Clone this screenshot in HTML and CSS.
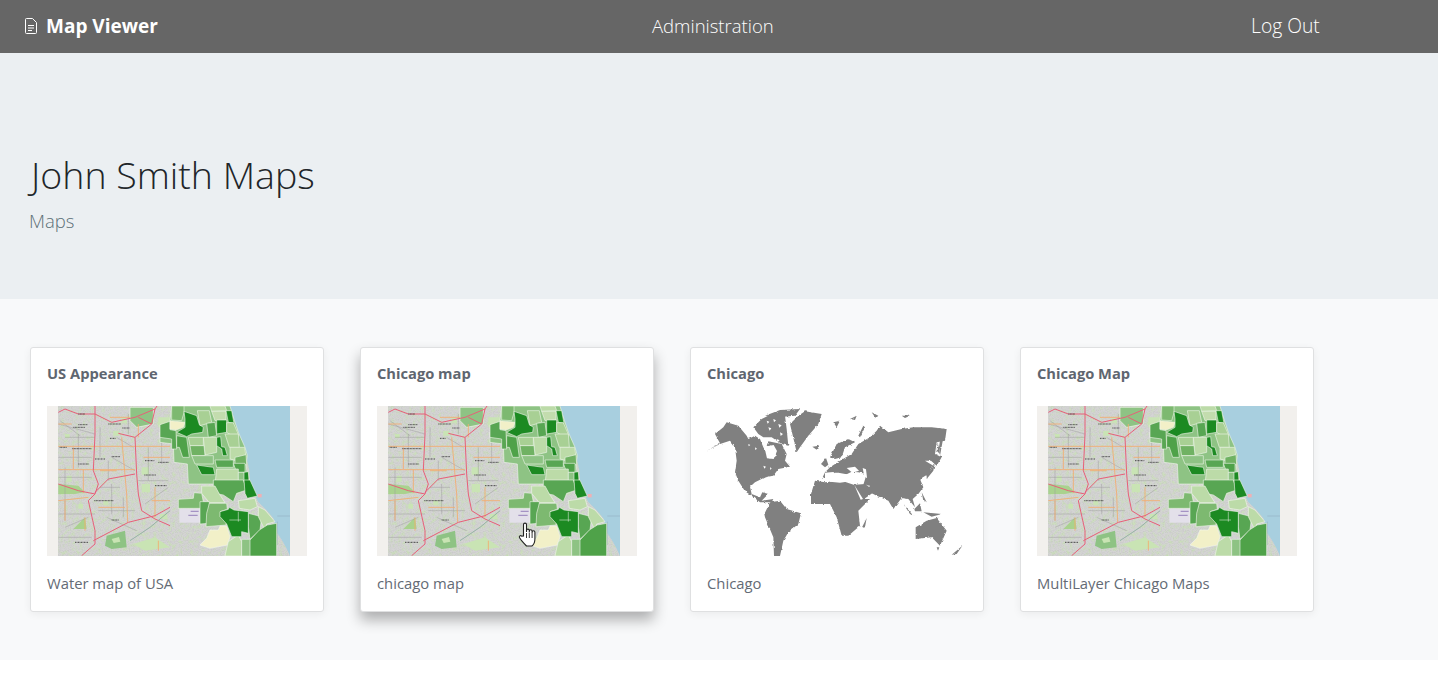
FILE: index.html
```html
<!DOCTYPE html>
<html lang="en">
<head>
  <meta charset="UTF-8">
  <title>Map Viewer</title>
  <link rel="stylesheet" href="styles.css">
</head>
<body>
  <svg class="defs" width="0" height="0">
    <defs>
      <filter id="speckle" x="0" y="0" width="100%" height="100%" color-interpolation-filters="sRGB">
        <feTurbulence type="fractalNoise" baseFrequency="0.09" numOctaves="2" seed="4"/>
        <feColorMatrix values="0 0 0 0 0.78  0 0 0 0 0.9  0 0 0 0 0.68  1.800 0 0 0 -0.82"/>
      </filter>
      <filter id="grain" x="0" y="0" width="100%" height="100%" color-interpolation-filters="sRGB">
        <feTurbulence type="fractalNoise" baseFrequency="0.3" numOctaves="2" seed="11"/>
        <feColorMatrix values="0 0 0 0 0.55  0 0 0 0 0.55  0 0 0 0 0.55  1.600 0 0 0 -0.62"/>
      </filter>
      <filter id="soft" x="0" y="0" width="100%" height="100%">
        <feGaussianBlur stdDeviation="1.800"/>
      </filter>
      <filter id="coast" x="-5%" y="-5%" width="110%" height="110%" color-interpolation-filters="sRGB">
        <feTurbulence type="fractalNoise" baseFrequency="0.1" numOctaves="2" seed="7"/>
        <feDisplacementMap in="SourceGraphic" scale="8" xChannelSelector="R" yChannelSelector="G"/>
        <feGaussianBlur stdDeviation="1"/>
      </filter>

      <symbol id="chicago" viewBox="81 198 780 450">
        <g filter="url(#soft)">
        <rect x="81" y="198" width="780" height="450" fill="#f2f0ed"/>
        <rect x="114" y="198" width="696" height="450" fill="#d4d4d4"/>
        <rect x="114" y="198" width="696" height="450" filter="url(#speckle)"/>
        <rect x="114" y="198" width="696" height="450" filter="url(#grain)" opacity=".2"/>

        <g transform="translate(75 192)">
          <!-- parks -->
          <g fill="#c9e4b4">
            <path d="M40 240l60 5 20 20-30 5h-50z" fill="#a9d28e"/>
            <path d="M85 375l35-35 5 35z" fill="#a9d28e"/>
            <path d="M265 420l65-20 45 30-75 10z"/>
            <path d="M65 215l15 0 0 18-15 0zM205 80l18 0 0 15-18 0zM230 40l16 2 0 14-16 0zM290 190l22 0 0 22-22 0zM290 240l25 0 0 25-25 0zM60 90l14 0 0 12-14 0zM175 290l15 0 0 14-15 0zM100 300l14 0 0 14-14 0zM345 330l22 0 0 15-22 0z"/>
            <path d="M340 40l35 0 0 25-35 5z"/>
          </g>
          <path d="M255 10h70v50l-50 10-20-20z" fill="#8ec384" stroke="#f0f5ea" stroke-width="2"/>
          <path d="M185 395l55-15 5 50-45 5-20-10z" fill="#8ec384"/>
          <path d="M200 405l22-6 4 14-20 4z" fill="#c9e4b4"/>

          <!-- minor roads -->
          <g fill="none" stroke="#9c9c9c" stroke-width="1.400">
            <path d="M45 50l60 45M60 100h90M40 160h100M165 70v90M200 160l70 40M200 240v90M40 330h110M60 370l70-30M160 320h110M280 230h90M310 130v100M350 70v110M165 250h60M235 280v60M40 400h100M185 340l90 40M300 300l70-50M40 60l110 30M215 100l50 30M60 190v160M100 90v100M40 220h100M190 170v60M250 30v60"/>
          </g>
          <g fill="none" stroke="#f3ad6e" stroke-width="2.600">
            <path d="M40 127H375M40 197H270M230 100l15 170 3 85M40 290l90-10M330 250v90M120 340v40M195 40h60M295 160h80M280 60v40M160 310h80M340 410v30M165 200h50M40 60h40M320 290h55M85 130v65M115 197v70M60 290v60"/>
          </g>

          <!-- highways -->
          <g fill="none" stroke="#e85f78" stroke-width="3">
            <path d="M40 25l20-10 40 15h50l50 25 70-15 60-25 10-15"/>
            <path d="M150 6v84l-5 110 15 40-10 30-20 20 20 90v40l-40 35"/>
            <path d="M330 15l-10 45-50 40 5 110 5 60 10 50 40 25 45 20"/>
            <path d="M150 265l40-40 80-15"/>
            <path d="M40 240l60 20 50 10"/>
            <path d="M145 410l105-55 80-20 45-25"/>
            <path d="M270 100l-50-12M320 60l-40-20"/>
          </g>
          <path d="M255 410l60-40 60-50" fill="none" stroke="#86a99b" stroke-width="2.400"/>

          <!-- place labels, tiny dark marks at this size -->
          <path d="M85 70h35M190 60h38M232 72h22M100 30h20M44 130h22M82 134h58M195 103h18M100 180h32M150 165h30M200 158h25M148 290h58M200 348h22M90 415h40M300 170h28M340 175h32M298 213h35M330 245h35M100 62h28" fill="none" stroke="#4a4a4a" stroke-width="3" stroke-dasharray="3 1.500"/>
        </g>

        <!-- lake -->
        <path d="M630 198h180v450l-8-18-14-26-16-24-12-45-18-22-28-28-12-28-12-32-2-34-8-36-10-26-12-24-5-36-8-20-6-20z" fill="#a8cfdf"/>
        <path d="M772 545v70M772 528h38" fill="none" stroke="#8fa6b8" stroke-width="1.500"/>
        <path d="M713 462h12v10h-12z" fill="#f0b0b5"/>

        <!-- purple campus -->
        <path d="M478 506h62v42h-62z" fill="#e3e0ea"/>
        <path d="M512 512h24v4h-24zM505 524h28v4h-28z" fill="#a593c4"/>

        <!-- choropleth, north half -->
        <g transform="translate(450 192)" stroke="#f1f6ec" stroke-width="1.800" stroke-linejoin="round">
          <path d="M5 6H180l10 34 15 45 20 45 7 25-4 25 7 60H55l-3-60-40-5-2-55-40-5v-30l10-15 20-20z" fill="#8ec384"/>
          <path d="M-30 62l30-10 0 25 18 3 2 55h-15l0-30-35-5z" fill="#58a652"/>
          <path d="M5 6h37v20l-7 24-30-2z" fill="#7db96f"/>
          <path d="M0 50l45 5-5 15-22 8-18-3z" fill="#f2f0c8"/>
          <path d="M42 22l38 13 8 27 12 8-2 15-33 5-15 8-30-13 25-15 0-25z" fill="#1f8a24"/>
          <path d="M82 20h36l7 35-35 10z" fill="#a8d094"/>
          <path d="M120 6h45l5 14-45 2z" fill="#bcdba8"/>
          <path d="M125 22h43v26l-33 2z" fill="#c3dcae"/>
          <path d="M168 20h17l7 38-17-3z" fill="#1f8a24"/>
          <path d="M110 58l25-3 5 40-25 5z" fill="#58a652"/>
          <path d="M140 48h30v37l-30 5z" fill="#1f8a24"/>
          <path d="M170 56h20l15 35-5 12-30-18z" fill="#a8d094"/>
          <path d="M55 100h45v25l-40 0z" fill="#a8d094"/>
          <path d="M20 95l30 5 8 60-20 0-10-30-8 0z" fill="#4fa24a"/>
          <path d="M100 100h40v45l-35 8z" fill="#bcdba8"/>
          <path d="M60 125h42l3 30-40 0z" fill="#6fb264"/>
          <path d="M140 100l12-2 3 30 10 2 7 25-14 0-3-20-15-10z" fill="#1f8a24"/>
          <path d="M165 90h40l3 40-30 0z" fill="#a8d094"/>
          <path d="M180 130h44l4 30-30 10-18-5z" fill="#bcdba8"/>
          <path d="M195 160l33-8 2 30-35 0z" fill="#6fb264"/>
          <path d="M65 155h65v25H75z" fill="#8ec384"/>
          <path d="M135 168h55v22h-50z" fill="#58a652"/>
          <path d="M80 183l50 7 5 22-40 0z" fill="#1f8a24"/>
          <path d="M190 178h35v27h-25z" fill="#4fa24a"/>
          <path d="M140 195h65v45h-70z" fill="#bcdba8"/>
          <path d="M205 205h17l13 35h-30z" fill="#8ec384"/>
          <path d="M222 205l13-2 3 40-16-2z" fill="#1f8a24"/>
        </g>

        <!-- choropleth, south half -->
        <g transform="translate(450 420)" stroke="#f1f6ec" stroke-width="1.800" stroke-linejoin="round">
          <path d="M130 0h90l10 30-30 10-10 25-30-20-15-3-15-25z" fill="#58a652"/>
          <path d="M95 18h40l13 24 17 26h-47l-23-28z" fill="#bcdba8"/>
          <path d="M222 0h18l22 48-30 7-7-15z" fill="#1f8a24"/>
          <path d="M25 58l45-3 2-17 23 2 5 25 20 5-30 15H25z" fill="#7db96f"/>
          <path d="M90 65h28v65l-28 2z" fill="#58a652"/>
          <path d="M118 70h52l2 18-22 7 20 17-2 23-60 5 2-40z" fill="#7db96f"/>
          <path d="M205 62l50-7 7 25-22 10-32-5z" fill="#bcdba8"/>
          <path d="M235 100l40 10-5 40-30 28-5-38z" fill="#58a652"/>
          <path d="M265 80l20 10 30 35-25 7-5 18-20-40z" fill="#bcdba8"/>
          <path d="M150 138h20l10 32-8 25-52 10-30-10 20-20 10-25 25 0z" fill="#f2f0c8"/>
          <path d="M175 185l30-20 10 20v43h-50l5-23z" fill="#bcdba8"/>
          <path d="M215 178h40l-5 50h-35z" fill="#8ec384"/>
          <path d="M240 180l28-30 24-15 28-5v98h-80z" fill="#4fa24a"/>
          <path d="M150 95l25-7 3-6 14 8 43 5v65l-20-5v15h-30l-15-38-20-22z" fill="#1f8a24"/>
          <path d="M178 120h35M205 95v30" fill="none" stroke-width="1.500"/>
        </g>
        </g>
      </symbol>

      <symbol id="world" viewBox="81 198 780 450">
        <g fill="#808080" filter="url(#coast)">
          <g transform="translate(75 192)">
            <path d="M5 140l40-22-15-28 25-20 10-15 35 10 25 30 5 10 20-10 15 10 10 25 20 35 20-10-10-25-20-5 5-13 40 8 15 30-5 20 15 18-35 7-15 20-25 5-30 15-15 13 5 22 25 10 7-15 18 5-20 20 35-5-5 10-35 0-25-20-20-13-20-32-10-25 5-35-5-40-15-20-30 10z"/>
            <path d="M145 70l25-25 30-15 40 5 5 40 5 50-20-5-30-20-25 0-15-10z"/>
            <path d="M180 35l45-17 60-3-15 20-35 3z"/>
            <path d="M255 60l25-25 20-13 50 8-10 30-30 35-25 35-10 15-7-30z"/>
            <path d="M322 128l20-3-7 12z"/>
            <path d="M178 330l17-35 30-5 20 25 43 13-8 32-30 25-15 25-10 46h-18l-2-56-25-60z"/>
            <path d="M348 180l15-18 7 20-10 8z"/>
          </g>
          <g transform="translate(435 192)">
            <path d="M15 160l20-40 35-15 20 10-30 15-10 30-20 5z"/>
            <path d="M-8 222l8-17 15-15 30-20 35-20 20-30 35-20 20-20 10-15 25 20 40-10 35-5 55 0 45 5-5 35-25 5-5 35 20 10-15 25-17-15-18 0 25 15-15 25-25 15 10 25-15 20-17 15 7 25-20-25-20-3-25 33-15-25-35-15-30-15 10-15-20-3 10-32-25-5-20-2-15 8-25-5-10 0-8 15z"/>
            <path d="M140 25l20 10-8 8z"/>
            <path d="M345 110l10-10-10 55-3-25z"/>
            <path d="M90 242l30-2 30 22-40 28-10-15z"/>
            <path d="M-42 270l12-40 30 5 50-5 45 15 13 40 27 0-35 35 5 45-35 30h-20l-15-55-20-40-57 0z"/>
            <path d="M110 372l15-30-5 28z"/>
            <path d="M272 370l33-20 30-8 30 38-20 45-25-25-48 5z"/>
            <path d="M335 430h8l-4 10z"/>
            <path d="M380 452l32-27-17 25z"/>
            <path d="M235 300l30 35-10-5zM268 315l17-17 5 24-20 0zM295 325l55 5-30 8zM290 265l15 30-10-5zM320 195l10-20-5 25-20 25 0-15zM338 115l7 35-10-10z"/>
            <path d="M25 55l20-5-10 20zM75 45l20-10-5 13zM115 65l-15 30 5 5 15-30zM230 35l25 0-15 7z"/>
          </g>
        </g>
        <!-- inland water and arctic gaps -->
        <g fill="#fff" transform="translate(75 192)">
          <path d="M178 128l28-5 10 18-10 24-20-2z"/>
          <path d="M185 50l8 3-5 6zM205 45l8 4-6 6zM220 60l10 4-7 7zM190 70l9 3-5 7zM225 85l9 5-7 6zM215 105l9 4-7 6zM130 120l6 3-5 4zM150 130l6 4-5 4zM175 185l8 3-5 6zM195 190l5 3-4 5z"/>
        </g>
        <g fill="#fff" transform="translate(435 192)">
          <path d="M0 206l25-2 12 10 22 10 18-2 8 8-40 6-45-4z"/>
          <path d="M65 192l25-4 12 12-20 6z"/>
          <path d="M113 192l10 4 3 25-8-4z"/>
          <path d="M88 243l26 42-7 2z"/>
        </g>
      </symbol>
    </defs>
  </svg>

  <nav class="navbar">
    <a class="brand" href="#">
      <svg class="brand-icon" viewBox="0 0 12 16" width="12" height="16" fill="none" stroke="#fff" stroke-width="1">
        <path d="M1.500.5h6l4 4v10a1 1 0 0 1-1 1h-9a1 1 0 0 1-1-1v-13a1 1 0 0 1 1-1z"/>
        <path d="M3 7.500h6M3 10h6M3 12.500h4"/>
      </svg>
      Map Viewer
    </a>
    <a class="nav-link" href="#">Administration</a>
    <a class="nav-link nav-logout" href="#">Log Out</a>
  </nav>

  <header class="hero">
    <h1>John Smith Maps</h1>
    <p>Maps</p>
  </header>

  <main class="album">
    <div class="card">
      <h5>US Appearance</h5>
      <svg class="thumb"><use href="#chicago"/></svg>
      <p>Water map of USA</p>
    </div>
    <div class="card card-hover">
      <h5>Chicago map</h5>
      <svg class="thumb"><use href="#chicago"/></svg>
      <p>chicago map</p>
      <svg class="cursor" viewBox="0 0 20 25" width="20" height="25">
        <path d="M5.500 14V2.600a1.500 1.500 0 0 1 3 0V10V8.500a1.400 1.400 0 0 1 2.800 0V10.500V9.200a1.400 1.400 0 0 1 2.800 0V11V10.200a1.400 1.400 0 0 1 2.800 0V17c0 3-1.600 6-3 7H8.500C6.500 22 3.500 19 1.600 15.800c-.9-1.600.9-2.800 2-1.700z" fill="#fff" stroke="#222" stroke-width="1.100"/>
        <path d="M8.500 11v5M11.300 11v5M14.100 11v5" stroke="#222" stroke-width=".9"/>
      </svg>
    </div>
    <div class="card">
      <h5>Chicago</h5>
      <svg class="thumb"><use href="#world"/></svg>
      <p>Chicago</p>
    </div>
    <div class="card">
      <h5>Chicago Map</h5>
      <svg class="thumb"><use href="#chicago"/></svg>
      <p>MultiLayer Chicago Maps</p>
    </div>
  </main>
</body>
</html>
```
FILE: styles.css
```css
html, body {
  margin: 0;
  padding: 0;
}
body {
  font-family: 'Open Sans', 'Noto Sans', sans-serif;
  background: #fff;
  color: #212529;
  height: 690px;
  overflow: hidden;
}
a {
  color: #fff;
  text-decoration: none;
}
.defs {
  display: block;
  height: 0;
}
.navbar {
  display: grid;
  grid-template-columns: 627px 599px 1fr;
  align-items: center;
  height: 53px;
  padding: 0 0 2px 25px;
  box-sizing: border-box;
  background: #666;
}
.brand {
  display: flex;
  align-items: center;
  gap: 9px;
  font-size: 19px;
  font-weight: 700;
}
.nav-link {
  font-size: 18.500px;
  font-weight: 300;
}
.nav-logout {
  font-size: 19.300px;
}
.hero {
  height: 246px;
  padding: 97px 0 0 29px;
  background: #ebeff2;
  box-sizing: border-box;
}
.hero h1 {
  margin: 0 0 0 2px;
  font-size: 37.500px;
  line-height: 50px;
  font-weight: 300;
  color: #212529;
}
.hero p {
  margin: 9px 0 0;
  font-size: 18.500px;
  line-height: 24px;
  font-weight: 300;
  color: #5c7077;
}
.album {
  display: flex;
  gap: 36px;
  height: 361px;
  box-sizing: border-box;
  padding: 48px 30px;
  background: #f8f9fa;
}
.card {
  position: relative;
  width: 294px;
  height: 265px;
  box-sizing: border-box;
  padding: 15px 16px;
  background: #fff;
  border: 1px solid #dfe0e1;
  border-radius: 3px;
  box-shadow: 0 2px 8px rgba(0,0,0,0.06);
}
.card-hover {
  box-shadow: 0 8px 14px rgba(0,0,0,0.3);
}
.card h5 {
  margin: 0 0 23px;
  font-size: 14.700px;
  line-height: 20px;
  font-weight: 700;
  color: #5f6670;
}
.thumb {
  display: block;
  width: 260px;
  height: 150px;
}
.card p {
  margin: 17px 0 0;
  font-size: 14.800px;
  line-height: 20px;
  color: #646b75;
}
.cursor {
  position: absolute;
  left: 157px;
  top: 174px;
}
```
